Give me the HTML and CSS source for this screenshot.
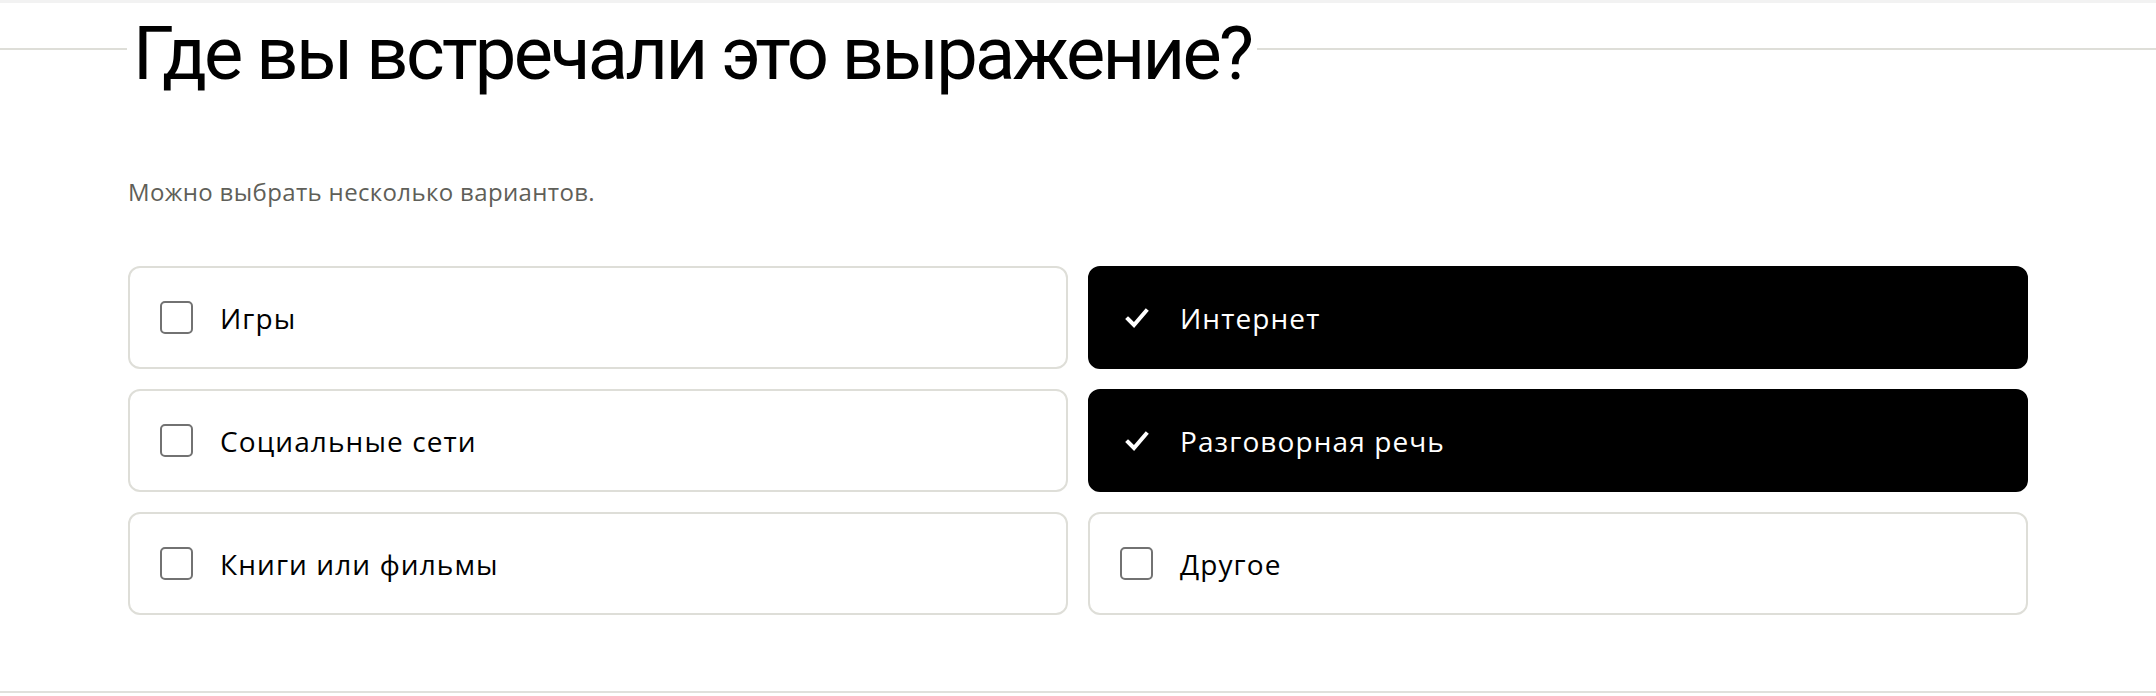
FILE: index.html
```html
<!DOCTYPE html>
<html lang="ru">
  <head>
    <meta charset="UTF-8" />
    <meta name="viewport" content="width=device-width, initial-scale=1.0" />
    <title>Где вы встречали это выражение?</title>
    <link rel="stylesheet" href="styles.css">
  </head>
  <body>
    <div class="top-strip"></div>
    <section class="question">
      <div class="question__head">
        <span class="question__rule question__rule--left"></span>
        <h1 class="question__title">Где вы встречали это выражение?</h1>
        <span class="question__rule"></span>
      </div>
      <p class="question__hint">Можно выбрать несколько вариантов.</p>

      <div class="options">
        <label class="option">
          <span class="option__box"></span>
          <span class="option__text">Игры</span>
        </label>
        <label class="option option--checked">
          <span class="option__box">
            <svg width="24" height="22" viewBox="0 0 24 22"><path d="M3 12 L9 18 L21 4" fill="none" stroke="#fff" stroke-width="4" stroke-linecap="square"/></svg>
          </span>
          <span class="option__text">Интернет</span>
        </label>
        <label class="option">
          <span class="option__box"></span>
          <span class="option__text">Социальные сети</span>
        </label>
        <label class="option option--checked">
          <span class="option__box">
            <svg width="24" height="22" viewBox="0 0 24 22"><path d="M3 12 L9 18 L21 4" fill="none" stroke="#fff" stroke-width="4" stroke-linecap="square"/></svg>
          </span>
          <span class="option__text">Разговорная речь</span>
        </label>
        <label class="option">
          <span class="option__box"></span>
          <span class="option__text">Книги или фильмы</span>
        </label>
        <label class="option">
          <span class="option__box"></span>
          <span class="option__text">Другое</span>
        </label>
      </div>
    </section>
    <div class="bottom-rule"></div>
  </body>
</html>
```

FILE: styles.css
```css
body {
  margin: 0;
  background: #fff;
  color: #000;
  font-family: "Open Sans", "Noto Sans", sans-serif;
}
.top-strip {
  height: 3px;
  background: #f2f2f2;
}
.question__head {
  display: flex;
  align-items: flex-start;
}
.question__rule {
  flex: 1;
  height: 2px;
  margin-top: 45px;
  background: #deded8;
}
.question__rule--left {
  flex: 0 0 127px;
}
.question__title {
  margin: 0;
  padding: 4px 6px 0 6px;
  font-family: Roboto, "Open Sans", sans-serif;
  font-size: 74px;
  font-weight: 400;
  line-height: 94px;
  letter-spacing: -2.7px;
}
.question__hint {
  margin: 76px 0 0 128px;
  font-size: 24px;
  line-height: 29px;
  letter-spacing: 0.35px;
  color: #5f5f59;
}
.options {
  display: grid;
  grid-template-columns: 1fr 1fr;
  gap: 20px;
  width: 1900px;
  margin: 60px 0 0 128px;
}
.option {
  display: flex;
  align-items: center;
  height: 103px;
  box-sizing: border-box;
  padding-left: 30px;
  border: 2px solid #deded8;
  border-radius: 12px;
  cursor: pointer;
}
.option__box {
  display: flex;
  align-items: center;
  justify-content: center;
  width: 33px;
  height: 33px;
  box-sizing: border-box;
  border: 2px solid #727272;
  border-radius: 5px;
  margin-right: 27px;
}
.option__text {
  font-size: 28px;
  line-height: 34px;
  letter-spacing: 1.1px;
}
.option--checked {
  background: #000;
  border-color: #000;
  color: #fff;
}
.option--checked .option__box {
  border: none;
}
.bottom-rule {
  height: 2px;
  margin-top: 76px;
  background: #e0e0dc;
}
```
